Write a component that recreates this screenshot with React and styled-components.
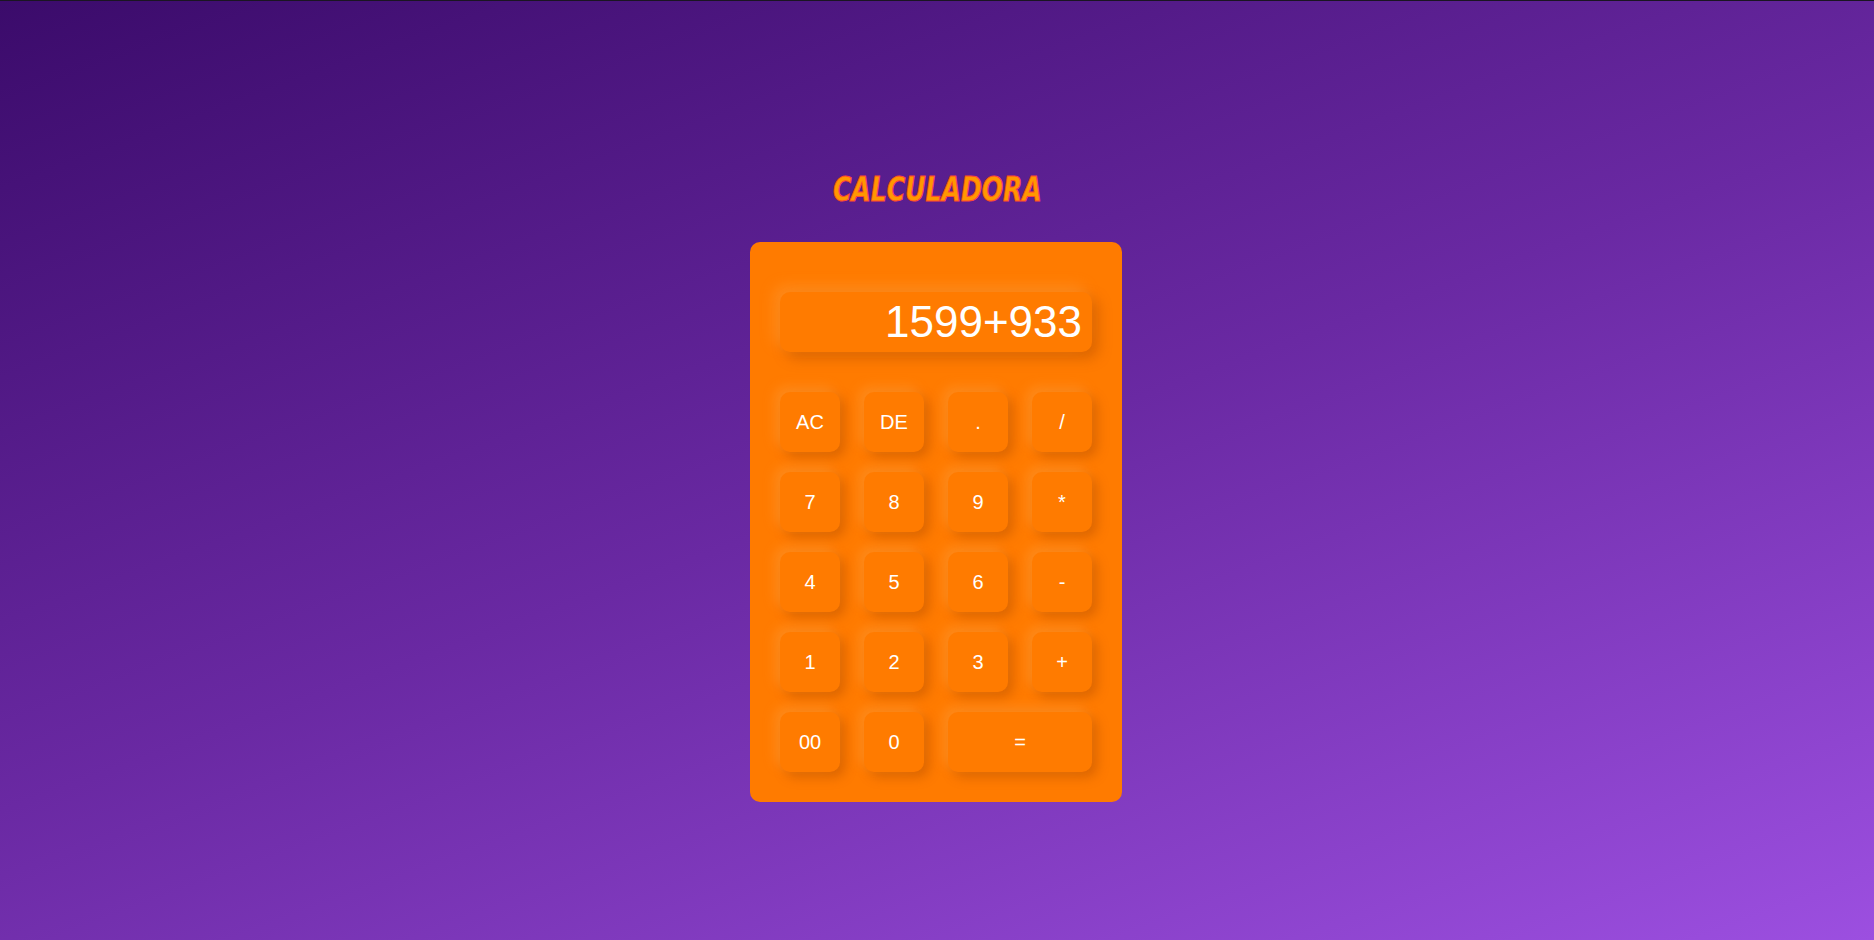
import React, { useState } from "react";
import styled, { createGlobalStyle } from "styled-components";

const GlobalStyle = createGlobalStyle`
  * {
    box-sizing: border-box;
  }

  body {
    margin: 0;
    font-family: "Liberation Sans", Arial, sans-serif;
  }
`;

const keys = [
  { label: "AC" },
  { label: "DE" },
  { label: "." },
  { label: "/" },
  { label: "7" },
  { label: "8" },
  { label: "9" },
  { label: "*" },
  { label: "4" },
  { label: "5" },
  { label: "6" },
  { label: "-" },
  { label: "1" },
  { label: "2" },
  { label: "3" },
  { label: "+" },
  { label: "00" },
  { label: "0" },
  { label: "=", wide: true },
];

export default function App() {
  const [value] = useState("1599+933");

  return (
    <Page>
      <GlobalStyle />
      <Title>CALCULADORA</Title>
      <Calculator>
        <Display>{value}</Display>
        <Keypad>
          {keys.map(({ label, wide }) => (
            <Key key={label} $wide={wide}>
              {label}
            </Key>
          ))}
        </Keypad>
      </Calculator>
    </Page>
  );
}

const Page = styled.div`
  width: 100%;
  min-height: 940px;
  border-top: 1px solid #1a1522;
  background: linear-gradient(160deg, #3b0b6b 0%, #6a29a3 50%, #9c4fe0 100%);
  display: flex;
  flex-direction: column;
  align-items: center;
  padding-top: 170px;
`;

const Title = styled.h1`
  margin: 0 0 34px;
  font-family: "DejaVu Sans Condensed", "DejaVu Sans", sans-serif;
  font-style: italic;
  font-weight: 700;
  font-size: 34px;
  line-height: 37px;
  letter-spacing: 0;
  color: #ff9800;
  -webkit-text-stroke: 1px #ff4a2e;
  transform: scaleX(0.82);
`;

const Calculator = styled.div`
  width: 372px;
  margin-right: 2px;
  background: #ff7b00;
  border-radius: 10px;
  padding: 50px 30px 30px;
`;

const Display = styled.div`
  height: 60px;
  border-radius: 10px;
  background: #ff7b00;
  color: #ffffff;
  font-family: "Liberation Sans", Arial, sans-serif;
  font-size: 44px;
  line-height: 60px;
  text-align: right;
  padding-right: 10px;
  box-shadow: -6px -6px 14px rgba(255, 160, 60, 0.45),
    6px 6px 14px rgba(150, 60, 0, 0.35);
`;

const Keypad = styled.div`
  margin-top: 40px;
  display: grid;
  grid-template-columns: repeat(4, 60px);
  justify-content: space-between;
  row-gap: 20px;
`;

const Key = styled.button`
  grid-column: ${({ $wide }) => ($wide ? "span 2" : "span 1")};
  height: 60px;
  border: none;
  border-radius: 10px;
  background: #ff7b00;
  color: #ffffff;
  font-family: "Liberation Sans", Arial, sans-serif;
  font-size: 20px;
  cursor: pointer;
  box-shadow: -5px -5px 12px rgba(255, 160, 60, 0.45),
    5px 5px 12px rgba(150, 60, 0, 0.35);
`;
